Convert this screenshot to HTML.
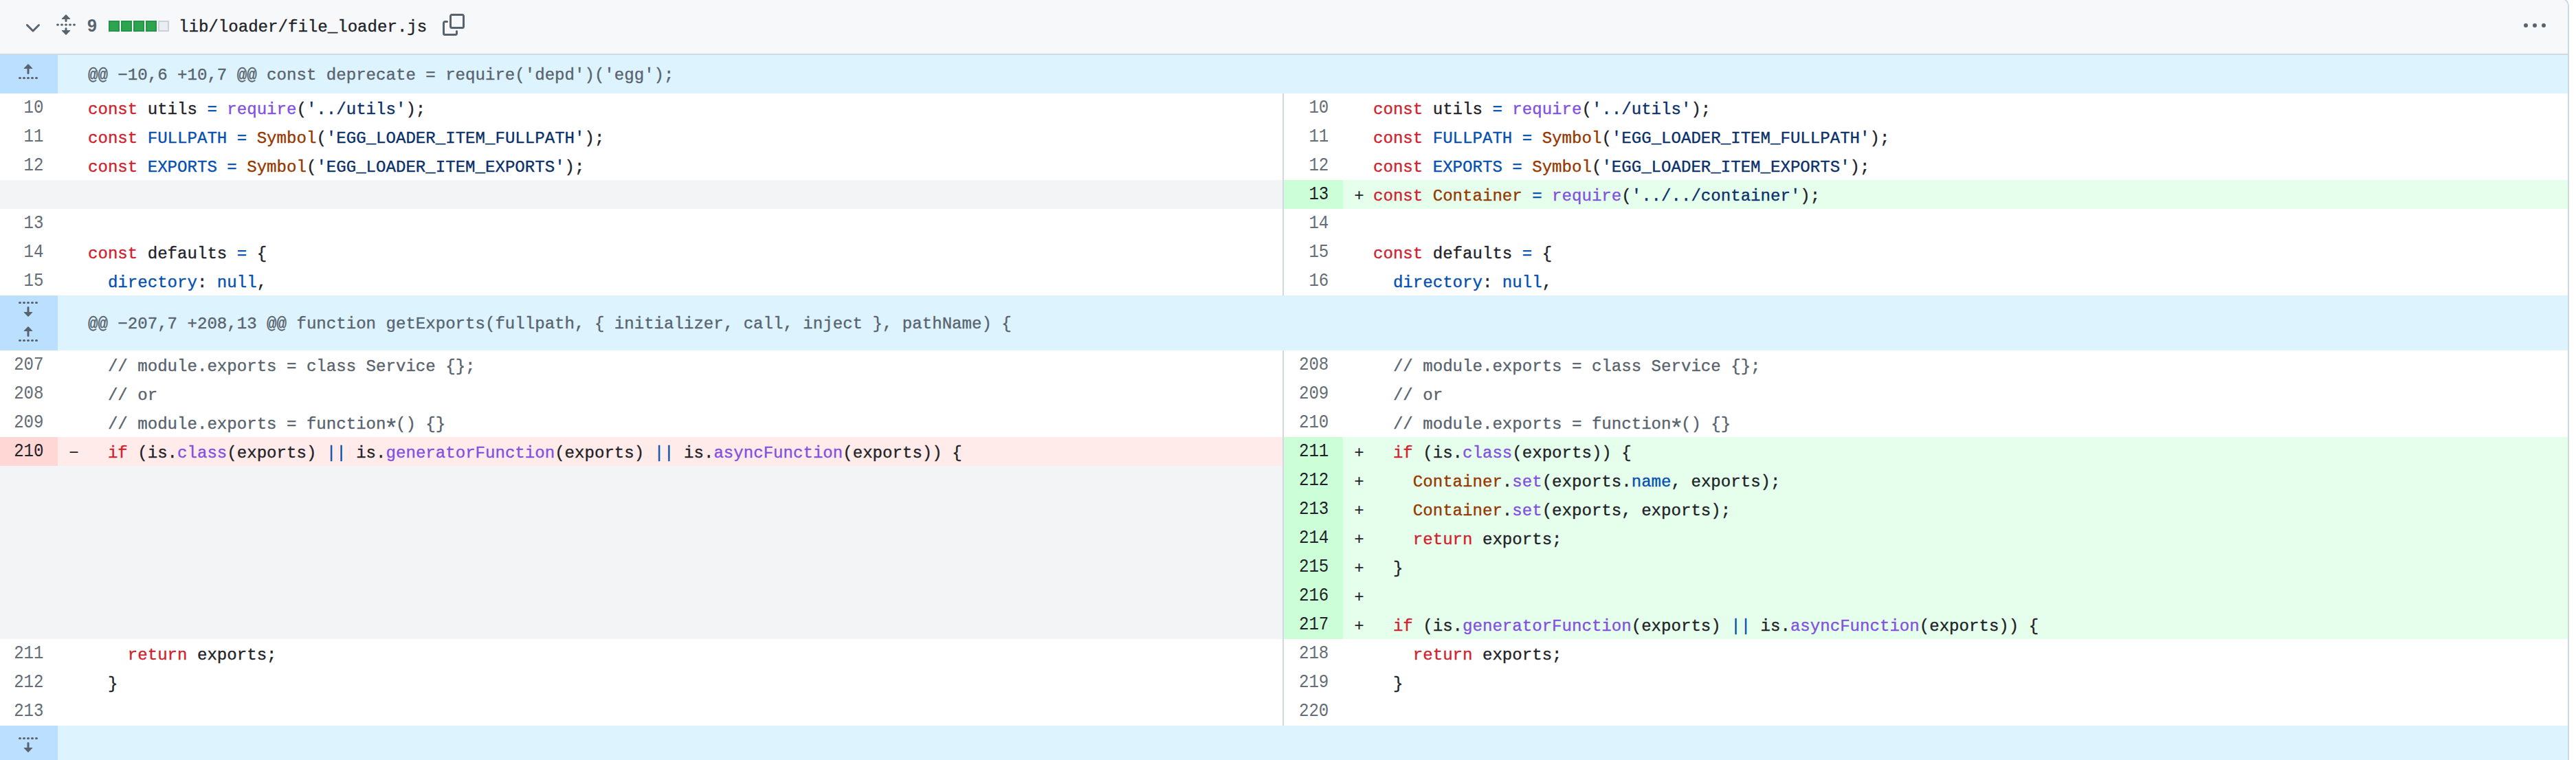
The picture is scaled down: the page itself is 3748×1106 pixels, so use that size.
<!DOCTYPE html>
<html><head><meta charset="utf-8"><style>
html,body{margin:0;padding:0;background:#fff;}
body{width:3748px;height:1106px;overflow:hidden;position:relative;}
#box{position:absolute;left:-4px;top:-3px;width:3738px;height:1300px;border:2px solid #d1d9e0;border-radius:4px 12px 12px 12px;overflow:hidden;background:#fff;}
#in{position:absolute;left:2px;top:1px;width:0;height:0;}
.r{position:absolute;}
.ic{position:absolute;}
.t{position:absolute;white-space:pre;font-family:"Liberation Mono",monospace;font-size:24.08px;line-height:40px;color:#1f2328;-webkit-text-stroke:0.35px currentColor;}
.num{color:#656d76;-webkit-text-stroke:0px currentColor;transform:scaleY(1.12);transform-origin:0 26.5px;}
.num.dk{color:#1f2328;}
.hk{color:#59636e;}
.mk{-webkit-text-stroke:0.1px currentColor;}
.k{color:#cf222e}.en{color:#8250df}.c1{color:#0550ae}.s{color:#0a3069}.v{color:#953800}.c{color:#59636e}
.ast{display:inline-block;-webkit-text-stroke:0.2px currentColor;transform:translateY(8.8px) scale(1.45);}
.nine{position:absolute;font-family:"Liberation Sans",sans-serif;font-weight:bold;font-size:25px;line-height:32px;color:#59636e;}
.sq{position:absolute;width:12px;height:12px;border:2px solid;}
.sqg{background:#2da44e;border-color:#26924a;}
.sqn{background:#eaeef2;border-color:#ccd1d6;}
</style></head><body><div id="box"><div id="in">
<div class="r" style="left:-2.00px;top:-1.00px;width:3738.00px;height:79.00px;background:#f6f8fa"></div>
<div class="r" style="left:-2.00px;top:78.00px;width:3738.00px;height:2.00px;background:#d1d9e0"></div>
<svg class="ic" style="left:31.75px;top:25.00px" width="32" height="32" viewBox="0 0 16 16" fill="#59636e"><path d="M12.78 5.22a.749.749 0 0 1 0 1.06l-4.25 4.25a.749.749 0 0 1-1.06 0L3.22 6.28a.749.749 0 0 1 .326-1.275.749.749 0 0 1 .734.215L8 8.939l3.72-3.719a.749.749 0 0 1 1.06 0Z"/></svg>
<svg class="ic" style="left:80.00px;top:20.00px" width="32" height="32" viewBox="0 0 16 16" fill="#59636e"><path d="m8.177.677 2.896 2.896a.25.25 0 0 1-.177.427H8.75v1.25a.75.75 0 0 1-1.5 0V4H5.104a.25.25 0 0 1-.177-.427L7.823.677a.25.25 0 0 1 .354 0ZM7.25 10.75a.75.75 0 0 1 1.5 0V12h2.146a.25.25 0 0 1 .177.427l-2.896 2.896a.25.25 0 0 1-.354 0l-2.896-2.896A.25.25 0 0 1 5.104 12H7.25v-1.25Zm-5-2a.75.75 0 0 0 0-1.5h-.5a.75.75 0 0 0 0 1.5h.5ZM6 8a.75.75 0 0 1-.75.75h-.5a.75.75 0 0 1 0-1.5h.5A.75.75 0 0 1 6 8Zm2.25.75a.75.75 0 0 0 0-1.5h-.5a.75.75 0 0 0 0 1.5h.5ZM12 8a.75.75 0 0 1-.75.75h-.5a.75.75 0 0 1 0-1.5h.5A.75.75 0 0 1 12 8Zm2.25.75a.75.75 0 0 0 0-1.5h-.5a.75.75 0 0 0 0 1.5h.5Z"/></svg>
<div class="nine" style="left:126.93px;top:21.15px">9</div>
<div class="sq sqg" style="left:158px;top:30px"></div>
<div class="sq sqg" style="left:176px;top:30px"></div>
<div class="sq sqg" style="left:194px;top:30px"></div>
<div class="sq sqg" style="left:212px;top:30px"></div>
<div class="sq sqn" style="left:230px;top:30px"></div>
<div class="t fname" style="left:260.00px;top:19.80px">lib/loader/file_loader.js</div>
<svg class="ic" style="left:644.00px;top:20.00px" width="32" height="32" viewBox="0 0 16 16" fill="#59636e"><path d="M0 6.75C0 5.784.784 5 1.75 5h1.5a.75.75 0 0 1 0 1.5h-1.5a.25.25 0 0 0-.25.25v7.5c0 .138.112.25.25.25h7.5a.25.25 0 0 0 .25-.25v-1.5a.75.75 0 0 1 1.5 0v1.5A1.75 1.75 0 0 1 9.25 16h-7.5A1.75 1.75 0 0 1 0 14.25Z"/><path d="M5 1.75C5 .784 5.784 0 6.75 0h7.5C15.216 0 16 .784 16 1.75v7.5A1.75 1.75 0 0 1 14.25 11h-7.5A1.75 1.75 0 0 1 5 9.25Zm1.75-.25a.25.25 0 0 0-.25.25v7.5c0 .138.112.25.25.25h7.5a.25.25 0 0 0 .25-.25v-7.5a.25.25 0 0 0-.25-.25Z"/></svg>
<svg class="ic" style="left:3672.00px;top:21.80px" width="32" height="32" viewBox="0 0 16 16" fill="#59636e"><path d="M8 9a1.5 1.5 0 1 0 0-3 1.5 1.5 0 0 0 0 3ZM1.5 9a1.5 1.5 0 1 0 0-3 1.5 1.5 0 0 0 0 3Zm13 0a1.5 1.5 0 1 0 0-3 1.5 1.5 0 0 0 0 3Z"/></svg>
<div class="r" style="left:-2.00px;top:80.00px;width:3738.00px;height:55.70px;background:#ddf4ff"></div>
<div class="r" style="left:-2.00px;top:80.00px;width:86.00px;height:55.70px;background:#bbdfff"></div>
<svg class="ic" style="left:25.00px;top:90.00px" width="32" height="32" viewBox="0 0 16 16" fill="#59636e"><path d="M7.823 1.677 4.927 4.573A.25.25 0 0 0 5.104 5H7.25v3.236a.75.75 0 1 0 1.5 0V5h2.146a.25.25 0 0 0 .177-.427L8.177 1.677a.25.25 0 0 0-.354 0ZM13.75 11a.75.75 0 0 0 0 1.5h.5a.75.75 0 0 0 0-1.5h-.5Zm-3.75.75a.75.75 0 0 1 .75-.75h.5a.75.75 0 0 1 0 1.5h-.5a.75.75 0 0 1-.75-.75ZM7.75 11a.75.75 0 0 0 0 1.5h.5a.75.75 0 0 0 0-1.5h-.5ZM4 11.75a.75.75 0 0 1 .75-.75h.5a.75.75 0 0 1 0 1.5h-.5a.75.75 0 0 1-.75-.75ZM1.75 11a.75.75 0 0 0 0 1.5h.5a.75.75 0 0 0 0-1.5h-.5Z"/></svg>
<div class="t hk" style="left:128.00px;top:89.75px">@@ −10,6 +10,7 @@ const deprecate = require(&#x27;depd&#x27;)(&#x27;egg&#x27;);</div>
<div class="t num" style="left:-136.50px;top:137.50px;width:200.00px;text-align:right">10</div>
<div class="t code" style="left:128.00px;top:139.95px"><span class="k">const</span> utils <span class="c1">=</span> <span class="en">require</span>(<span class="s">&#x27;../utils&#x27;</span>);</div>
<div class="t num" style="left:1733.30px;top:137.50px;width:200.00px;text-align:right">10</div>
<div class="t code" style="left:1998.00px;top:139.95px"><span class="k">const</span> utils <span class="c1">=</span> <span class="en">require</span>(<span class="s">&#x27;../utils&#x27;</span>);</div>
<div class="t num" style="left:-136.50px;top:179.53px;width:200.00px;text-align:right">11</div>
<div class="t code" style="left:128.00px;top:181.98px"><span class="k">const</span> <span class="c1">FULLPATH</span> <span class="c1">=</span> <span class="v">Symbol</span>(<span class="s">&#x27;EGG_LOADER_ITEM_FULLPATH&#x27;</span>);</div>
<div class="t num" style="left:1733.30px;top:179.53px;width:200.00px;text-align:right">11</div>
<div class="t code" style="left:1998.00px;top:181.98px"><span class="k">const</span> <span class="c1">FULLPATH</span> <span class="c1">=</span> <span class="v">Symbol</span>(<span class="s">&#x27;EGG_LOADER_ITEM_FULLPATH&#x27;</span>);</div>
<div class="t num" style="left:-136.50px;top:221.56px;width:200.00px;text-align:right">12</div>
<div class="t code" style="left:128.00px;top:224.01px"><span class="k">const</span> <span class="c1">EXPORTS</span> <span class="c1">=</span> <span class="v">Symbol</span>(<span class="s">&#x27;EGG_LOADER_ITEM_EXPORTS&#x27;</span>);</div>
<div class="t num" style="left:1733.30px;top:221.56px;width:200.00px;text-align:right">12</div>
<div class="t code" style="left:1998.00px;top:224.01px"><span class="k">const</span> <span class="c1">EXPORTS</span> <span class="c1">=</span> <span class="v">Symbol</span>(<span class="s">&#x27;EGG_LOADER_ITEM_EXPORTS&#x27;</span>);</div>
<div class="r" style="left:-2.00px;top:261.79px;width:1868.00px;height:42.03px;background:#f3f4f6"></div>
<div class="r" style="left:1868.00px;top:261.79px;width:86.00px;height:42.03px;background:#ccffd8"></div>
<div class="r" style="left:1954.00px;top:261.79px;width:1782.00px;height:42.03px;background:#e6ffec"></div>
<div class="t num dk" style="left:1733.30px;top:263.59px;width:200.00px;text-align:right">13</div>
<div class="t mk" style="left:1970.28px;top:266.04px">+</div>
<div class="t code" style="left:1998.00px;top:266.04px"><span class="k">const</span> <span class="v">Container</span> <span class="c1">=</span> <span class="en">require</span>(<span class="s">&#x27;../../container&#x27;</span>);</div>
<div class="t num" style="left:-136.50px;top:305.62px;width:200.00px;text-align:right">13</div>
<div class="t num" style="left:1733.30px;top:305.62px;width:200.00px;text-align:right">14</div>
<div class="t num" style="left:-136.50px;top:347.65px;width:200.00px;text-align:right">14</div>
<div class="t code" style="left:128.00px;top:350.10px"><span class="k">const</span> defaults <span class="c1">=</span> {</div>
<div class="t num" style="left:1733.30px;top:347.65px;width:200.00px;text-align:right">15</div>
<div class="t code" style="left:1998.00px;top:350.10px"><span class="k">const</span> defaults <span class="c1">=</span> {</div>
<div class="t num" style="left:-136.50px;top:389.68px;width:200.00px;text-align:right">15</div>
<div class="t code" style="left:128.00px;top:392.13px">  <span class="c1">directory</span>: <span class="c1">null</span>,</div>
<div class="t num" style="left:1733.30px;top:389.68px;width:200.00px;text-align:right">16</div>
<div class="t code" style="left:1998.00px;top:392.13px">  <span class="c1">directory</span>: <span class="c1">null</span>,</div>
<div class="r" style="left:-2.00px;top:429.91px;width:3738.00px;height:79.80px;background:#ddf4ff"></div>
<div class="r" style="left:-2.00px;top:429.91px;width:86.00px;height:79.80px;background:#bbdfff"></div>
<svg class="ic" style="left:25.00px;top:432.41px" width="32" height="32" viewBox="0 0 16 16" fill="#59636e"><path d="m8.177 14.323 2.896-2.896a.25.25 0 0 0-.177-.427H8.75V7.764a.75.75 0 1 0-1.5 0V11H5.104a.25.25 0 0 0-.177.427l2.896 2.896a.25.25 0 0 0 .354 0ZM2.25 5a.75.75 0 0 0 0-1.5h-.5a.75.75 0 0 0 0 1.5h.5ZM6 4.25a.75.75 0 0 1-.75.75h-.5a.75.75 0 0 1 0-1.5h.5a.75.75 0 0 1 .75.75ZM8.25 5a.75.75 0 0 0 0-1.5h-.5a.75.75 0 0 0 0 1.5h.5ZM12 4.25a.75.75 0 0 1-.75.75h-.5a.75.75 0 0 1 0-1.5h.5a.75.75 0 0 1 .75.75Zm2.25.75a.75.75 0 0 0 0-1.5h-.5a.75.75 0 0 0 0 1.5h.5Z"/></svg>
<svg class="ic" style="left:25.00px;top:472.41px" width="32" height="32" viewBox="0 0 16 16" fill="#59636e"><path d="M7.823 1.677 4.927 4.573A.25.25 0 0 0 5.104 5H7.25v3.236a.75.75 0 1 0 1.5 0V5h2.146a.25.25 0 0 0 .177-.427L8.177 1.677a.25.25 0 0 0-.354 0ZM13.75 11a.75.75 0 0 0 0 1.5h.5a.75.75 0 0 0 0-1.5h-.5Zm-3.75.75a.75.75 0 0 1 .75-.75h.5a.75.75 0 0 1 0 1.5h-.5a.75.75 0 0 1-.75-.75ZM7.75 11a.75.75 0 0 0 0 1.5h.5a.75.75 0 0 0 0-1.5h-.5ZM4 11.75a.75.75 0 0 1 .75-.75h.5a.75.75 0 0 1 0 1.5h-.5a.75.75 0 0 1-.75-.75ZM1.75 11a.75.75 0 0 0 0 1.5h.5a.75.75 0 0 0 0-1.5h-.5Z"/></svg>
<div class="t hk" style="left:128.00px;top:451.51px">@@ −207,7 +208,13 @@ function getExports(fullpath, { initializer, call, inject }, pathName) {</div>
<div class="t num" style="left:-136.50px;top:511.51px;width:200.00px;text-align:right">207</div>
<div class="t code" style="left:128.00px;top:513.96px">  <span class="c">// module.exports = class Service {};</span></div>
<div class="t num" style="left:1733.30px;top:511.51px;width:200.00px;text-align:right">208</div>
<div class="t code" style="left:1998.00px;top:513.96px">  <span class="c">// module.exports = class Service {};</span></div>
<div class="t num" style="left:-136.50px;top:553.54px;width:200.00px;text-align:right">208</div>
<div class="t code" style="left:128.00px;top:555.99px">  <span class="c">// or</span></div>
<div class="t num" style="left:1733.30px;top:553.54px;width:200.00px;text-align:right">209</div>
<div class="t code" style="left:1998.00px;top:555.99px">  <span class="c">// or</span></div>
<div class="t num" style="left:-136.50px;top:595.57px;width:200.00px;text-align:right">209</div>
<div class="t code" style="left:128.00px;top:598.02px">  <span class="c">// module.exports = function<span class="ast">*</span>() {}</span></div>
<div class="t num" style="left:1733.30px;top:595.57px;width:200.00px;text-align:right">210</div>
<div class="t code" style="left:1998.00px;top:598.02px">  <span class="c">// module.exports = function<span class="ast">*</span>() {}</span></div>
<div class="r" style="left:-2.00px;top:635.80px;width:86.00px;height:42.03px;background:#ffd7d5"></div>
<div class="r" style="left:84.00px;top:635.80px;width:1782.00px;height:42.03px;background:#ffebe9"></div>
<div class="t num dk" style="left:-136.50px;top:637.60px;width:200.00px;text-align:right">210</div>
<div class="t mk" style="left:100.28px;top:640.05px">−</div>
<div class="t code" style="left:128.00px;top:640.05px">  <span class="k">if</span> (is.<span class="en">class</span>(exports) <span class="c1">||</span> is.<span class="en">generatorFunction</span>(exports) <span class="c1">||</span> is.<span class="en">asyncFunction</span>(exports)) {</div>
<div class="r" style="left:1868.00px;top:635.80px;width:86.00px;height:42.03px;background:#ccffd8"></div>
<div class="r" style="left:1954.00px;top:635.80px;width:1782.00px;height:42.03px;background:#e6ffec"></div>
<div class="t num dk" style="left:1733.30px;top:637.60px;width:200.00px;text-align:right">211</div>
<div class="t mk" style="left:1970.28px;top:640.05px">+</div>
<div class="t code" style="left:1998.00px;top:640.05px">  <span class="k">if</span> (is.<span class="en">class</span>(exports)) {</div>
<div class="r" style="left:-2.00px;top:677.83px;width:1868.00px;height:42.03px;background:#f3f4f6"></div>
<div class="r" style="left:1868.00px;top:677.83px;width:86.00px;height:42.03px;background:#ccffd8"></div>
<div class="r" style="left:1954.00px;top:677.83px;width:1782.00px;height:42.03px;background:#e6ffec"></div>
<div class="t num dk" style="left:1733.30px;top:679.63px;width:200.00px;text-align:right">212</div>
<div class="t mk" style="left:1970.28px;top:682.08px">+</div>
<div class="t code" style="left:1998.00px;top:682.08px">    <span class="v">Container</span>.<span class="en">set</span>(exports.<span class="c1">name</span>, exports);</div>
<div class="r" style="left:-2.00px;top:719.86px;width:1868.00px;height:42.03px;background:#f3f4f6"></div>
<div class="r" style="left:1868.00px;top:719.86px;width:86.00px;height:42.03px;background:#ccffd8"></div>
<div class="r" style="left:1954.00px;top:719.86px;width:1782.00px;height:42.03px;background:#e6ffec"></div>
<div class="t num dk" style="left:1733.30px;top:721.66px;width:200.00px;text-align:right">213</div>
<div class="t mk" style="left:1970.28px;top:724.11px">+</div>
<div class="t code" style="left:1998.00px;top:724.11px">    <span class="v">Container</span>.<span class="en">set</span>(exports, exports);</div>
<div class="r" style="left:-2.00px;top:761.89px;width:1868.00px;height:42.03px;background:#f3f4f6"></div>
<div class="r" style="left:1868.00px;top:761.89px;width:86.00px;height:42.03px;background:#ccffd8"></div>
<div class="r" style="left:1954.00px;top:761.89px;width:1782.00px;height:42.03px;background:#e6ffec"></div>
<div class="t num dk" style="left:1733.30px;top:763.69px;width:200.00px;text-align:right">214</div>
<div class="t mk" style="left:1970.28px;top:766.14px">+</div>
<div class="t code" style="left:1998.00px;top:766.14px">    <span class="k">return</span> exports;</div>
<div class="r" style="left:-2.00px;top:803.92px;width:1868.00px;height:42.03px;background:#f3f4f6"></div>
<div class="r" style="left:1868.00px;top:803.92px;width:86.00px;height:42.03px;background:#ccffd8"></div>
<div class="r" style="left:1954.00px;top:803.92px;width:1782.00px;height:42.03px;background:#e6ffec"></div>
<div class="t num dk" style="left:1733.30px;top:805.72px;width:200.00px;text-align:right">215</div>
<div class="t mk" style="left:1970.28px;top:808.17px">+</div>
<div class="t code" style="left:1998.00px;top:808.17px">  }</div>
<div class="r" style="left:-2.00px;top:845.95px;width:1868.00px;height:42.03px;background:#f3f4f6"></div>
<div class="r" style="left:1868.00px;top:845.95px;width:86.00px;height:42.03px;background:#ccffd8"></div>
<div class="r" style="left:1954.00px;top:845.95px;width:1782.00px;height:42.03px;background:#e6ffec"></div>
<div class="t num dk" style="left:1733.30px;top:847.75px;width:200.00px;text-align:right">216</div>
<div class="t mk" style="left:1970.28px;top:850.20px">+</div>
<div class="r" style="left:-2.00px;top:887.98px;width:1868.00px;height:42.03px;background:#f3f4f6"></div>
<div class="r" style="left:1868.00px;top:887.98px;width:86.00px;height:42.03px;background:#ccffd8"></div>
<div class="r" style="left:1954.00px;top:887.98px;width:1782.00px;height:42.03px;background:#e6ffec"></div>
<div class="t num dk" style="left:1733.30px;top:889.78px;width:200.00px;text-align:right">217</div>
<div class="t mk" style="left:1970.28px;top:892.23px">+</div>
<div class="t code" style="left:1998.00px;top:892.23px">  <span class="k">if</span> (is.<span class="en">generatorFunction</span>(exports) <span class="c1">||</span> is.<span class="en">asyncFunction</span>(exports)) {</div>
<div class="t num" style="left:-136.50px;top:931.81px;width:200.00px;text-align:right">211</div>
<div class="t code" style="left:128.00px;top:934.26px">    <span class="k">return</span> exports;</div>
<div class="t num" style="left:1733.30px;top:931.81px;width:200.00px;text-align:right">218</div>
<div class="t code" style="left:1998.00px;top:934.26px">    <span class="k">return</span> exports;</div>
<div class="t num" style="left:-136.50px;top:973.84px;width:200.00px;text-align:right">212</div>
<div class="t code" style="left:128.00px;top:976.29px">  }</div>
<div class="t num" style="left:1733.30px;top:973.84px;width:200.00px;text-align:right">219</div>
<div class="t code" style="left:1998.00px;top:976.29px">  }</div>
<div class="t num" style="left:-136.50px;top:1015.87px;width:200.00px;text-align:right">213</div>
<div class="t num" style="left:1733.30px;top:1015.87px;width:200.00px;text-align:right">220</div>
<div class="r" style="left:-2.00px;top:1056.10px;width:3738.00px;height:200.00px;background:#ddf4ff"></div>
<div class="r" style="left:-2.00px;top:1056.10px;width:86.00px;height:200.00px;background:#bbdfff"></div>
<svg class="ic" style="left:25.00px;top:1065.60px" width="32" height="32" viewBox="0 0 16 16" fill="#59636e"><path d="m8.177 14.323 2.896-2.896a.25.25 0 0 0-.177-.427H8.75V7.764a.75.75 0 1 0-1.5 0V11H5.104a.25.25 0 0 0-.177.427l2.896 2.896a.25.25 0 0 0 .354 0ZM2.25 5a.75.75 0 0 0 0-1.5h-.5a.75.75 0 0 0 0 1.5h.5ZM6 4.25a.75.75 0 0 1-.75.75h-.5a.75.75 0 0 1 0-1.5h.5a.75.75 0 0 1 .75.75ZM8.25 5a.75.75 0 0 0 0-1.5h-.5a.75.75 0 0 0 0 1.5h.5ZM12 4.25a.75.75 0 0 1-.75.75h-.5a.75.75 0 0 1 0-1.5h.5a.75.75 0 0 1 .75.75Zm2.25.75a.75.75 0 0 0 0-1.5h-.5a.75.75 0 0 0 0 1.5h.5Z"/></svg>
<div class="r" style="left:1866.00px;top:135.70px;width:2.00px;height:294.21px;background:#d1d9e0"></div>
<div class="r" style="left:1866.00px;top:509.71px;width:2.00px;height:546.39px;background:#d1d9e0"></div>
</div></div></body></html>
